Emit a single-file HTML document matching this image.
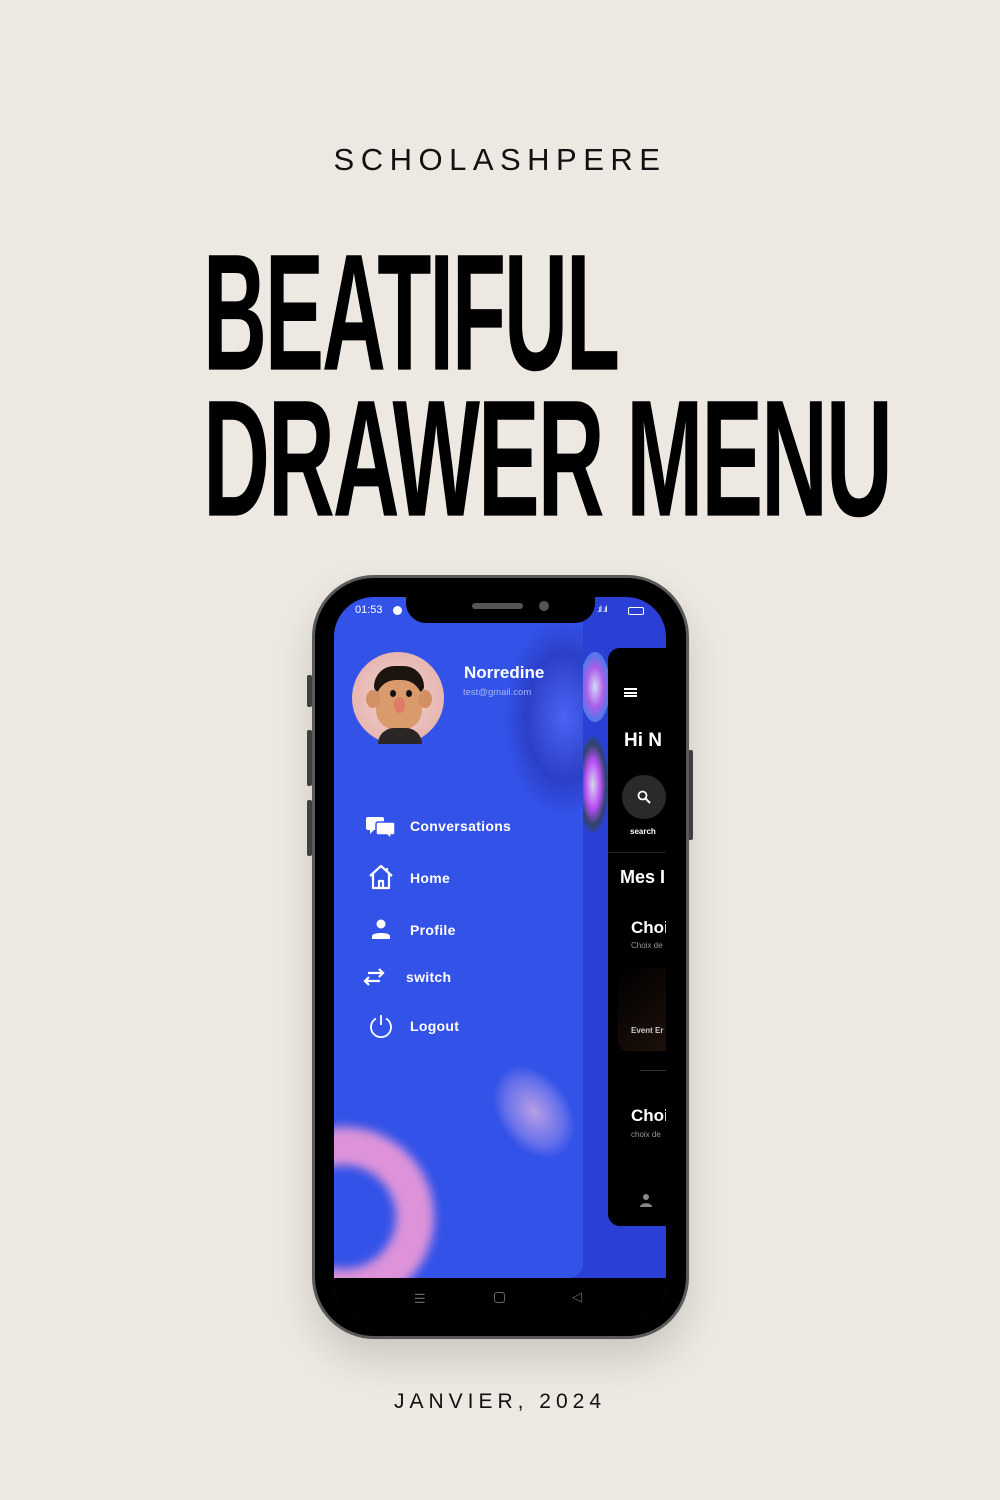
<!DOCTYPE html>
<html><head><meta charset="utf-8"><style>
*{margin:0;padding:0;box-sizing:border-box}
body{width:1000px;height:1500px;background:#ede9e2;position:relative;overflow:hidden;font-family:"Liberation Sans",sans-serif}
.abs{position:absolute}
.brand{left:0;width:1000px;top:142px;text-align:center;font-size:31px;letter-spacing:6.5px;color:#111}
.date{left:0;width:1000px;top:1390px;text-align:center;font-size:21px;letter-spacing:5px;color:#111}
.t{left:203px;font-weight:bold;color:#000;font-size:175px;line-height:1;transform-origin:0 0;white-space:nowrap;letter-spacing:-4px}
.phone{left:312px;top:575px;width:377px;height:764px;border-radius:62px;background:#000;border:3px solid #5a5a5a;box-shadow:0 20px 40px rgba(0,0,0,.15)}
.btn{background:#444;width:5px;border-radius:2px}
.screen{left:334px;top:597px;width:332px;height:719px;border-radius:40px 40px 28px 28px;overflow:hidden;background:#2a40d4}
.drawer{left:0;top:0;width:249px;height:681px;background:#3352e8;border-radius:0 0 14px 0;overflow:hidden}
.nav{left:0;top:681px;width:332px;height:38px;background:#000}
.notch{left:406px;top:597px;width:189px;height:26px;background:#000;border-radius:0 0 20px 20px}
.mi{color:#fff;font-size:14px;font-weight:bold;letter-spacing:.3px}
.card{left:274px;top:51px;width:70px;height:578px;background:#000;border-radius:12px 0 0 12px}
.wt{color:#fff;font-weight:bold}
</style></head><body>
<div class="abs brand">SCHOLASHPERE</div>
<div class="abs t" style="top:230px;transform:scaleX(.506) scaleY(.95)">BEATIFUL</div>
<div class="abs t" style="top:376px;transform:scaleX(.53) scaleY(.95)">DRAWER MENU</div>

<div class="abs btn" style="left:307px;top:675px;height:32px"></div>
<div class="abs btn" style="left:307px;top:730px;height:56px"></div>
<div class="abs btn" style="left:307px;top:800px;height:56px"></div>
<div class="abs btn" style="left:688px;top:750px;height:90px"></div>
<div class="abs phone"></div>
<div class="abs screen">
  <div class="abs" style="left:246px;top:55px;width:30px;height:70px;border-radius:50%;background:radial-gradient(ellipse,#fff,#c6e 40%,#58e 70%,rgba(42,64,212,0) 90%);opacity:.8"></div>
  <div class="abs" style="left:244px;top:140px;width:30px;height:95px;border-radius:50%;background:radial-gradient(ellipse,#ffe,#d5f 35%,#345 60%,rgba(42,64,212,0) 85%);opacity:.8"></div>
  <div class="abs drawer">
    <div class="abs" style="left:170px;top:20px;width:120px;height:200px;border-radius:50%;background:radial-gradient(ellipse at center,#4a63f5 0%,#2b40c8 45%,rgba(51,82,232,0) 70%)"></div>
    <div class="abs" style="left:165px;top:465px;width:70px;height:100px;transform:rotate(-35deg);border-radius:40px;background:radial-gradient(ellipse,rgba(240,190,230,.7),rgba(200,170,240,.35) 50%,rgba(51,82,232,0) 72%)"></div>
    <div class="abs" style="left:-80px;top:530px;width:180px;height:180px;border-radius:50%;border:38px solid #f09ad8;filter:blur(5px);opacity:.9"></div>
  </div>
  <div class="abs nav">
    <div class="abs" style="left:80px;top:13px;color:#666;font-size:13px">☰</div>
    <div class="abs" style="left:160px;top:14px;width:11px;height:11px;border:1.5px solid #666;border-radius:3px"></div>
    <div class="abs" style="left:238px;top:11px;color:#666;font-size:13px">◁</div>
  </div>
  <div class="abs card">
    <div class="abs" style="left:16px;top:40px;width:13px;height:9px;border-top:2px solid #fff;border-bottom:2px solid #fff"><div style="margin-top:1.5px;height:2px;background:#fff"></div></div>
    <div class="abs wt" style="left:16px;top:82px;font-size:19px">Hi N</div>
    <div class="abs" style="left:14px;top:127px;width:44px;height:44px;border-radius:50%;background:#2a2a2a"></div>
    <svg class="abs" style="left:29px;top:142px" width="14" height="14" viewBox="0 0 14 14"><circle cx="5.5" cy="5.5" r="4" fill="none" stroke="#fff" stroke-width="1.8"/><path d="M8.5 8.5L13 13" stroke="#fff" stroke-width="2"/></svg>
    <div class="abs wt" style="left:22px;top:179px;font-size:8px">search</div>
    <div class="abs" style="left:0;top:204px;width:70px;height:1px;background:#222"></div>
    <div class="abs wt" style="left:12px;top:219px;font-size:18px">Mes I</div>
    <div class="abs wt" style="left:23px;top:270px;font-size:17px">Choi</div>
    <div class="abs" style="left:23px;top:293px;font-size:8px;color:#999">Choix de</div>
    <div class="abs" style="left:10px;top:320px;width:60px;height:83px;background:linear-gradient(135deg,#000,#1f120c);border-radius:10px"></div>
    <div class="abs wt" style="left:23px;top:378px;font-size:8px;color:#ccc">Event Er</div>
    <div class="abs" style="left:32px;top:422px;width:38px;height:1px;background:#333"></div>
    <div class="abs wt" style="left:23px;top:458px;font-size:17px">Choi</div>
    <div class="abs" style="left:23px;top:482px;font-size:8px;color:#999">choix de</div>
    <svg class="abs" style="left:32px;top:545px" width="12" height="14" viewBox="0 0 12 14"><circle cx="6" cy="4" r="3" fill="#888"/><path d="M0 14C0 9 12 9 12 14Z" fill="#888"/></svg>
  </div>
</div>
<div class="abs notch">
  <div class="abs" style="left:66px;top:6px;width:51px;height:6px;border-radius:3px;background:#555"></div>
  <div class="abs" style="left:133px;top:4px;width:10px;height:10px;border-radius:50%;background:#555"></div>
</div>
<div class="abs" style="left:355px;top:604px;color:#fff;font-size:11px">01:53</div>
<div class="abs" style="left:393px;top:606px;width:9px;height:9px;border-radius:50%;background:#fff"></div>
<div class="abs" style="left:597px;top:604px;color:#fff;font-size:9px;letter-spacing:-1px">.ıl .ıl</div>
<div class="abs" style="left:628px;top:607px;width:16px;height:8px;border:1.2px solid #fff;border-radius:2px"></div>

<div class="abs" style="left:352px;top:652px;width:92px;height:92px;border-radius:50%;background:radial-gradient(circle at 50% 50%,#f3d3cf,#e1aaa6)"></div>
<div class="abs" style="left:374px;top:666px;width:50px;height:26px;border-radius:22px 22px 6px 6px;background:#1d1410"></div>
<div class="abs" style="left:376px;top:680px;width:46px;height:50px;border-radius:20px;background:#d99a6c"></div>
<div class="abs" style="left:366px;top:690px;width:14px;height:18px;border-radius:50%;background:#d39064"></div>
<div class="abs" style="left:418px;top:690px;width:14px;height:18px;border-radius:50%;background:#d39064"></div>
<div class="abs" style="left:390px;top:690px;width:6px;height:7px;border-radius:50%;background:#111"></div>
<div class="abs" style="left:406px;top:690px;width:6px;height:7px;border-radius:50%;background:#111"></div>
<div class="abs" style="left:394px;top:697px;width:11px;height:16px;border-radius:50%;background:#e07a6a"></div>
<div class="abs" style="left:378px;top:728px;width:44px;height:16px;border-radius:16px 16px 0 0;background:#2a2626"></div>

<div class="abs wt" style="left:464px;top:663px;font-size:17px">Norredine</div>
<div class="abs" style="left:463px;top:687px;font-size:9.5px;color:#aab5f5">test@gmail.com</div>

<svg class="abs" style="left:366px;top:815px" width="30" height="24" viewBox="0 0 30 24"><path d="M2 2h14a2 2 0 0 1 2 2v9a2 2 0 0 1-2 2H8l-4 4v-4H2a2 2 0 0 1-2-2V4a2 2 0 0 1 2-2z" fill="#fff"/><path d="M12 7h15a2 2 0 0 1 2 2v9a2 2 0 0 1-2 2h-2v4l-4-4h-9a2 2 0 0 1-2-2V9a2 2 0 0 1 2-2z" fill="#fff" stroke="#3352e8" stroke-width="1.5"/></svg>
<div class="abs mi" style="left:410px;top:818px">Conversations</div>
<svg class="abs" style="left:367px;top:864px" width="28" height="26" viewBox="0 0 28 26"><path d="M3 12L14 2l11 10M6 10v14h16V10M12 24v-7h4v7M20 4v4" fill="none" stroke="#fff" stroke-width="2.2" stroke-linejoin="round"/></svg>
<div class="abs mi" style="left:410px;top:870px">Home</div>
<svg class="abs" style="left:371px;top:919px" width="20" height="20" viewBox="0 0 20 20"><circle cx="10" cy="5" r="4.5" fill="#fff"/><path d="M1 20v-3c0-4 18-4 18 0v3z" fill="#fff"/></svg>
<div class="abs mi" style="left:410px;top:922px">Profile</div>
<svg class="abs" style="left:362px;top:968px" width="24" height="18" viewBox="0 0 24 18"><path d="M6 5h15M17 1l4 4-4 4M18 13H3M7 9l-4 4 4 4" fill="none" stroke="#fff" stroke-width="2.2"/></svg>
<div class="abs mi" style="left:406px;top:969px">switch</div>
<svg class="abs" style="left:368px;top:1013px" width="26" height="26" viewBox="0 0 26 26"><path d="M8 5.5A10 10 0 1 0 18 5.5" fill="none" stroke="#fff" stroke-width="1.8"/><path d="M13 2v10" stroke="#fff" stroke-width="1.8"/></svg>
<div class="abs mi" style="left:410px;top:1018px">Logout</div>

<div class="abs date">JANVIER, 2024</div>
</body></html>
